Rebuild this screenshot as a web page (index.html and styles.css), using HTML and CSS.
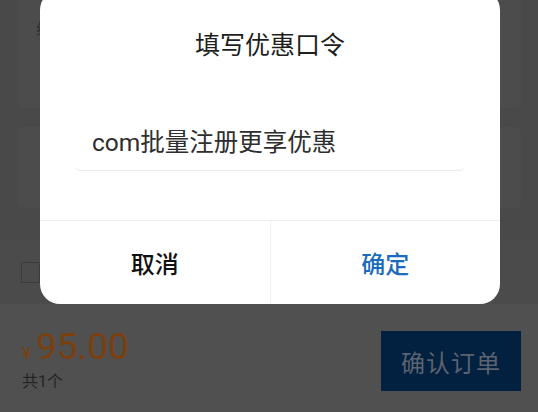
FILE: index.html
```html
<!DOCTYPE html>
<html lang="zh-CN">
<head>
<meta charset="utf-8">
<title>填写优惠口令</title>
<link rel="stylesheet" href="styles.css">
</head>
<body>
<div class="page">
  <div class="content">
    <div class="card card-a"><span class="label">续费年限</span></div>
    <div class="card card-b"></div>
    <div class="agree-row"><span class="checkbox"></span></div>
  </div>
  <div class="footer">
    <div class="total">
      <div class="price"><span class="yen">&#165;</span><span class="amount">95.00</span></div>
      <div class="count">共1个</div>
    </div>
    <button class="submit">确认订单</button>
  </div>
</div>
<div class="dialog">
  <div class="dialog-title">填写优惠口令</div>
  <div class="dialog-input">com批量注册更享优惠</div>
  <div class="dialog-actions">
    <button class="action cancel">取消</button>
    <button class="action confirm">确定</button>
  </div>
</div>
</body>
</html>
```
FILE: styles.css
```css
* { box-sizing: border-box; }
html, body {
  margin: 0;
  padding: 0;
  width: 538px;
  height: 412px;
  overflow: hidden;
  font-family: Roboto, "Noto Sans CJK SC", sans-serif;
}
.page {
  position: relative;
  width: 538px;
  height: 412px;
  background: #494949;
  display: flex;
  flex-direction: column;
}
.content {
  display: flex;
  flex-direction: column;
  height: 304px;
}
.card {
  margin: 0 17px 0 18px;
  background: #4c4c4c;
  border-radius: 6px;
}
.card-a {
  margin-top: -30px;
  height: 138px;
  padding: 46px 0 0 18px;
}
.label {
  font-size: 16px;
  color: #2c2c2c;
}
.card-b {
  margin-top: 19px;
  height: 81px;
}
.agree-row {
  margin-top: 32px;
  height: 64px;
  background: #4b4b4b;
  display: flex;
  align-items: center;
  padding-left: 21px;
}
.checkbox {
  width: 19px;
  height: 21px;
  border: 1px solid #3b3b3b;
  border-radius: 1px;
}
.footer {
  flex: 1;
  background: #505050;
  display: flex;
  justify-content: space-between;
  align-items: flex-start;
  padding: 0 17px 0 22px;
}
.total {
  margin-top: 23px;
  display: flex;
  flex-direction: column;
}
.price {
  line-height: 40px;
  height: 40px;
  color: #7a3f0e;
  white-space: nowrap;
}
.yen {
  font-size: 17px;
  margin-right: 5px;
  vertical-align: baseline;
}
.amount {
  font-size: 37px;
  vertical-align: baseline;
}
.count {
  margin-top: 5px;
  font-size: 16px;
  line-height: 20px;
  color: #242424;
}
.submit {
  margin-top: 27px;
  width: 140px;
  height: 60px;
  border: 0;
  padding: 0;
  background: #02203f;
  color: #5b6371;
  font-family: Roboto, "Noto Sans CJK SC", sans-serif;
  font-size: 24px;
  letter-spacing: 1px;
}
.dialog {
  position: absolute;
  left: 40px;
  top: -10px;
  width: 460px;
  height: 314px;
  background: #fff;
  border-radius: 20px;
  display: flex;
  flex-direction: column;
}
.dialog-title {
  padding-top: 40px;
  font-size: 25px;
  line-height: 32px;
  text-align: center;
  color: #1e1e1e;
}
.dialog-input {
  margin: 48px 35px 0 35px;
  height: 61px;
  padding-left: 17px;
  display: flex;
  align-items: center;
  font-size: 24.5px;
  color: #2e2e2e;
  border-bottom: 1px solid #eaeaea;
  border-radius: 0 0 6px 6px;
}
.dialog-actions {
  margin-top: 49px;
  flex: 1;
  display: flex;
  border-top: 1px solid #efefef;
}
.action {
  flex: 1;
  border: 0;
  background: transparent;
  font-family: Roboto, "Noto Sans CJK SC", sans-serif;
  font-size: 24px;
  font-weight: 500;
  padding: 0;
}
.cancel { color: #111; }
.confirm {
  color: #1b6cbf;
  border-left: 1px solid #f1f1f1;
}
```
